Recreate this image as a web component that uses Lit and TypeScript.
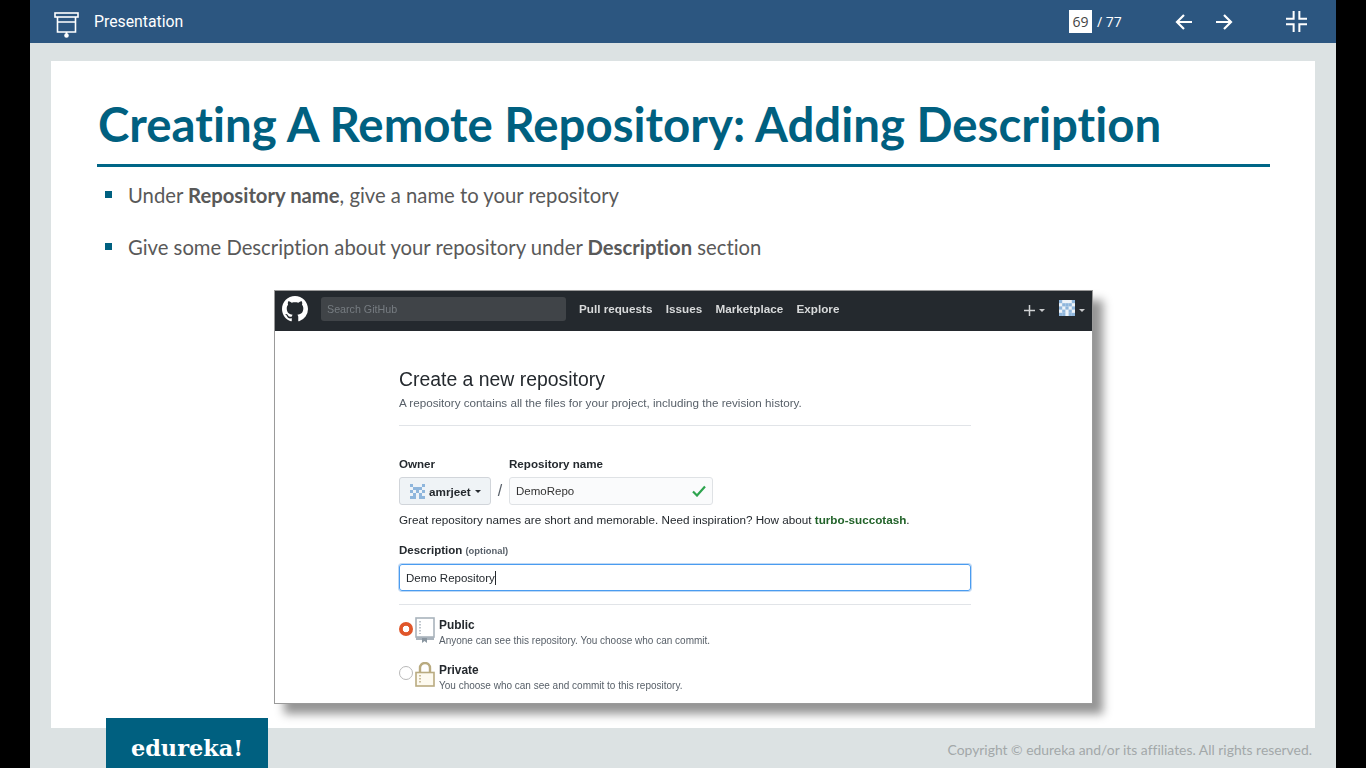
import { LitElement, html, css, svg } from "lit";
import { customElement } from "lit/decorators.js";

const identicon = (size: number) => {
  const cells = [
    [0,0],[4,0],[1,1],[3,1],[2,1],[0,2],[2,2],[4,2],[1,3],[3,3],[0,4],[1,4],[3,4],[4,4],
  ];
  return html`<svg width=${size} height=${size} viewBox="0 0 5 5" shape-rendering="auto">
    <rect width="5" height="5" fill="#eef3f8"></rect>
    ${cells.map(([x, y]) => svg`<rect x=${x} y=${y} width="1" height="1" fill="#8fb6dc"></rect>`)}
  </svg>`;
};

@customElement("app-root")
export class AppRoot extends LitElement {
  static styles = css`
    :host { display: block; width: 1366px; height: 768px; background: #000; overflow: hidden; }
    .stage { margin: 0 30px; width: 1306px; height: 768px; background: #dce2e3; display: flex; flex-direction: column; position: relative; font-variant-ligatures: none; }
    .topbar { height: 43px; flex: none; background: #2c5680; color: #fff; display: flex; align-items: center; font-family: Roboto, sans-serif; }
    .pres-icon { margin-left: 24px; display: block; }
    .pres-label { margin-left: 14px; font-size: 15.8px; margin-top: -1px; width: 90px; white-space: nowrap; }
    .pager { margin-left: 885px; display: flex; align-items: center; font-family: "Open Sans", sans-serif; font-size: 14px; }
    .page-box { width: 23px; height: 23px; background: #fff; color: #444; display: flex; align-items: center; justify-content: center; }
    .page-total { margin-left: 5px; }
    .nav { display: flex; align-items: center; margin-left: 52px; gap: 20px; }
    .nav svg { display: block; }
    .collapse { margin-left: 52px; display: block; }
    .slide { margin: 18px 21px 0 21px; height: 667px; flex: none; background: #fff; display: flex; flex-direction: column; box-sizing: border-box; padding: 35px 45px 0 46px; }
    h1 { margin: 0; height: 68px; padding-left: 1px; border-bottom: 3px solid #006687; box-sizing: content-box; font-family: Lato, sans-serif; font-weight: 700; font-size: 47.4px; line-height: 56px; color: #006080; white-space: nowrap; }
    .bullets { list-style: none; margin: 0; padding: 0; font-family: Lato, sans-serif; font-size: 20.25px; line-height: 24px; color: #595959; }
    .bullets li { display: flex; align-items: flex-start; height: 52px; padding-left: 8px; }
    .bullets li:first-child { margin-top: 15px; }
    .bullet-text { padding-top: 1px; }
    .sq { width: 7px; height: 7px; background: #006080; margin-top: 9px; margin-right: 16px; flex: none; }
    .bullets b { font-weight: 700; }
    .shot-wrap { display: flex; justify-content: flex-start; padding-left: 177px; margin-top: 4px; }
    .shot { width: 819px; height: 414px; box-sizing: border-box; border: 1px solid #9a9a9a; background: #fff; box-shadow: 10px 10px 9px rgba(0,0,0,.42); font-family: "Liberation Sans", sans-serif; overflow: hidden; display: flex; flex-direction: column; }
    .gh-bar { height: 40px; box-sizing: border-box; padding-bottom: 4px; flex: none; background: #24292e; color: #fff; display: flex; align-items: center; padding-left: 7px; filter: blur(.3px); }
    .gh-logo { display: block; }
    .gh-search { margin-left: 13px; width: 245px; height: 24px; background: #404448; border-radius: 3px; color: #767c81; font-size: 10.7px; line-height: 24px; padding-left: 6px; box-sizing: border-box; }
    .gh-links { display: flex; margin-left: 13px; margin-top: -1px; gap: 13.4px; font-size: 11.7px; font-weight: 700; color: #d8dadb; }
    .gh-right { margin-left: auto; display: flex; align-items: center; padding-right: 7px; margin-top: 2px; }
    .caret { width: 0; height: 0; border-left: 3px solid transparent; border-right: 3px solid transparent; border-top: 3.5px solid #c8cacc; margin-left: 4px; }
    .plus { display: block; }
    .avatar { margin-left: 14px; display: block; }
    .gh-body { padding: 34px 0 0 124px; width: 572px; color: #24292e; filter: blur(.3px); }
    .title { font-size: 19.4px; line-height: 28px; white-space: nowrap; }
    .sub { font-size: 11.67px; line-height: 14px; color: #586069; margin-top: 3px; white-space: nowrap; }
    .hr { height: 1px; background: #e1e4e8; width: 572px; }
    .hr1 { margin-top: 15px; }
    .labels { display: flex; margin-top: 31px; font-size: 11.6px; font-weight: 700; line-height: 14px; }
    .labels span:first-child { width: 110px; }
    .row { display: flex; align-items: center; margin-top: 6px; }
    .owner { width: 92px; height: 28px; box-sizing: border-box; border: 1px solid #d1d5da; border-radius: 3px; background: #eff3f6; display: flex; align-items: center; padding-left: 10px; font-size: 11.7px; font-weight: 700; }
    .owner .on { margin-left: 4px; }
    .owner .caret { border-top-color: #24292e; }
    .slash { width: 18px; text-align: center; font-size: 16px; color: #586069; }
    .repo { width: 204px; height: 28px; box-sizing: border-box; border: 1px solid #dfe2e5; border-radius: 3px; background: #fafbfc; display: flex; align-items: center; justify-content: space-between; padding: 0 6px 0 6px; font-size: 11.5px; color: #333; }
    .hint { font-size: 11.7px; line-height: 14px; margin-top: 8px; white-space: nowrap; }
    .hint b { color: #22632a; }
    .desc-label { margin-top: 16px; font-size: 11.5px; font-weight: 700; line-height: 14px; }
    .desc-label small { font-size: 9.4px; color: #586069; }
    .desc { margin-top: 6px; height: 27px; width: 572px; box-sizing: border-box; border: 1px solid #4a9cf0; border-radius: 3px; box-shadow: 0 0 0 1px rgba(3,102,214,.25); display: flex; align-items: center; padding-left: 6px; font-size: 11.5px; color: #24292e; }
    .cursor { display: inline-block; width: 1px; height: 14px; background: #24292e; }
    .hr2 { margin-top: 13px; }
    .opt { display: flex; height: 45px; }
    .opt.first { margin-top: 12px; }
    .radio { width: 14px; height: 14px; box-sizing: border-box; border-radius: 50%; flex: none; }
    .radio.on { margin-top: 5px; background: radial-gradient(circle, #fff 0 3px, #e0562a 3.6px); }
    .radio.off { margin-top: 4px; border: 1px solid #b8b8b8; background: #fff; }
    .opt svg { margin-left: 2px; flex: none; display: block; }
    .opt-text { margin-left: 4px; }
    .opt-name { font-size: 11.9px; font-weight: 700; line-height: 16px; }
    .opt-sub { font-size: 10px; line-height: 14px; color: #586069; margin-top: 1px; white-space: nowrap; }
    .footer { flex: 1; display: flex; justify-content: flex-end; align-items: center; padding-right: 24px; font-family: Lato, sans-serif; font-size: 13.9px; color: #a3a8a9; padding-top: 2px; }
    .logo { position: absolute; left: 76px; top: 718px; width: 162px; height: 50px; background: #006080; color: #fff; font-family: "DejaVu Serif", serif; font-weight: 700; font-size: 22.4px; display: flex; align-items: center; justify-content: center; padding-top: 10px; box-sizing: border-box; }
  `;

  render() {
    return html`<div class="stage">
      <div class="topbar">
        <svg class="pres-icon" width="26" height="36" viewBox="0 0 26 36" fill="none" stroke="#fff" stroke-width="1.6">
          <rect x="1" y="9" width="23" height="4"></rect>
          <path d="M3.5 13v15h18V13M3.5 18h18M12.5 28v2"></path>
          <circle cx="12.5" cy="31.5" r="1.5" fill="#fff"></circle>
        </svg>
        <span class="pres-label">Presentation</span>
        <div class="pager">
          <span class="page-box">69</span>
          <span class="page-total">/ 77</span>
        </div>
        <div class="nav">
          <svg width="20" height="18" viewBox="0 0 20 18" fill="none" stroke="#fff" stroke-width="2.2"><path d="M18 9H3M10 2 3 9l7 7"></path></svg>
          <svg width="20" height="18" viewBox="0 0 20 18" fill="none" stroke="#fff" stroke-width="2.2"><path d="M2 9h15M10 2l7 7-7 7"></path></svg>
        </div>
        <svg class="collapse" width="21" height="21" viewBox="0 0 22 22" fill="none" stroke="#fff" stroke-width="2.1"><path d="M8 0v8H0M14 0v8h8M8 22v-8H0M14 22v-8h8"></path></svg>
      </div>
      <div class="slide">
        <h1>Creating A Remote Repository: Adding Description</h1>
        <ul class="bullets">
          <li><span class="sq"></span><span class="bullet-text">Under <b>Repository name</b>, give a name to your repository</span></li>
          <li><span class="sq"></span><span class="bullet-text">Give some Description about your repository under <b>Description</b> section</span></li>
        </ul>
        <div class="shot-wrap">
          <div class="shot">
            <div class="gh-bar">
              <svg class="gh-logo" width="26" height="26" viewBox="0 0 16 16" fill="#fff"><path d="M8 0C3.58 0 0 3.58 0 8c0 3.54 2.29 6.53 5.47 7.59.4.07.55-.17.55-.38 0-.19-.01-.82-.01-1.49-2.01.37-2.53-.49-2.69-.94-.09-.23-.48-.94-.82-1.13-.28-.15-.68-.52-.01-.53.63-.01 1.08.58 1.23.82.72 1.21 1.87.87 2.33.66.07-.52.28-.87.51-1.07-1.78-.2-3.64-.89-3.64-3.95 0-.87.31-1.59.82-2.15-.08-.2-.36-1.02.08-2.12 0 0 .67-.21 2.2.82.64-.18 1.32-.27 2-.27.68 0 1.36.09 2 .27 1.53-1.04 2.2-.82 2.2-.82.44 1.1.16 1.92.08 2.12.51.56.82 1.27.82 2.15 0 3.07-1.87 3.75-3.65 3.95.29.25.54.73.54 1.48 0 1.07-.01 1.93-.01 2.2 0 .21.15.46.55.38A8.013 8.013 0 0016 8c0-4.42-3.58-8-8-8z"></path></svg>
              <div class="gh-search">Search GitHub</div>
              <div class="gh-links"><span>Pull requests</span><span>Issues</span><span>Marketplace</span><span>Explore</span></div>
              <div class="gh-right">
                <svg class="plus" width="11" height="11" viewBox="0 0 11 11" stroke="#d0d2d4" stroke-width="1.5"><path d="M5.5 0v11M0 5.500h11"></path></svg>
                <span class="caret"></span>
                <span class="avatar">${identicon(16)}</span>
                <span class="caret"></span>
              </div>
            </div>
            <div class="gh-body">
              <div class="title">Create a new repository</div>
              <div class="sub">A repository contains all the files for your project, including the revision history.</div>
              <div class="hr hr1"></div>
              <div class="labels"><span>Owner</span><span>Repository name</span></div>
              <div class="row">
                <div class="owner">${identicon(15)}<span class="on">amrjeet</span><span class="caret"></span></div>
                <div class="slash">/</div>
                <div class="repo"><span>DemoRepo</span>
                  <svg width="14" height="12" viewBox="0 0 14 12" fill="none" stroke="#2da44e" stroke-width="2.2"><path d="M1 6.500 5 10.500 13 1.500"></path></svg>
                </div>
              </div>
              <div class="hint">Great repository names are short and memorable. Need inspiration? How about <b>turbo-succotash</b>.</div>
              <div class="desc-label">Description <small>(optional)</small></div>
              <div class="desc">Demo Repository<span class="cursor"></span></div>
              <div class="hr hr2"></div>
              <div class="opt first">
                <span class="radio on"></span>
                <svg width="20" height="26" viewBox="0 0 20 26" fill="none"><rect x="1" y="1" width="18" height="19" stroke="#a9b3bc" stroke-width="1.6" fill="#fff"></rect><path d="M5 4v13" stroke="#a9b3bc" stroke-width="1.5" stroke-dasharray="1.500 1.500"></path><path d="M1 20h18v3H1z" fill="#a9b3bc"></path><path d="M7 21h5v5l-2.500-2L7 26z" fill="#8a96a0"></path></svg>
                <div class="opt-text"><div class="opt-name">Public</div><div class="opt-sub">Anyone can see this repository. You choose who can commit.</div></div>
              </div>
              <div class="opt">
                <span class="radio off"></span>
                <svg width="20" height="25" viewBox="0 0 20 25" fill="none"><path d="M5 11V6a5 5 0 0 1 10 0v5" stroke="#b9ab80" stroke-width="2.400"></path><rect x="1" y="10.500" width="18" height="13.500" fill="#fdfaf0" stroke="#b9ab80" stroke-width="1.600"></rect><path d="M5 13v9" stroke="#b9ab80" stroke-width="1.500" stroke-dasharray="1.500 1.500"></path></svg>
                <div class="opt-text"><div class="opt-name">Private</div><div class="opt-sub">You choose who can see and commit to this repository.</div></div>
              </div>
            </div>
          </div>
        </div>
      </div>
      <div class="footer">Copyright © edureka and/or its affiliates. All rights reserved.</div>
      <div class="logo">edureka!</div>
    </div>`;
  }
}
